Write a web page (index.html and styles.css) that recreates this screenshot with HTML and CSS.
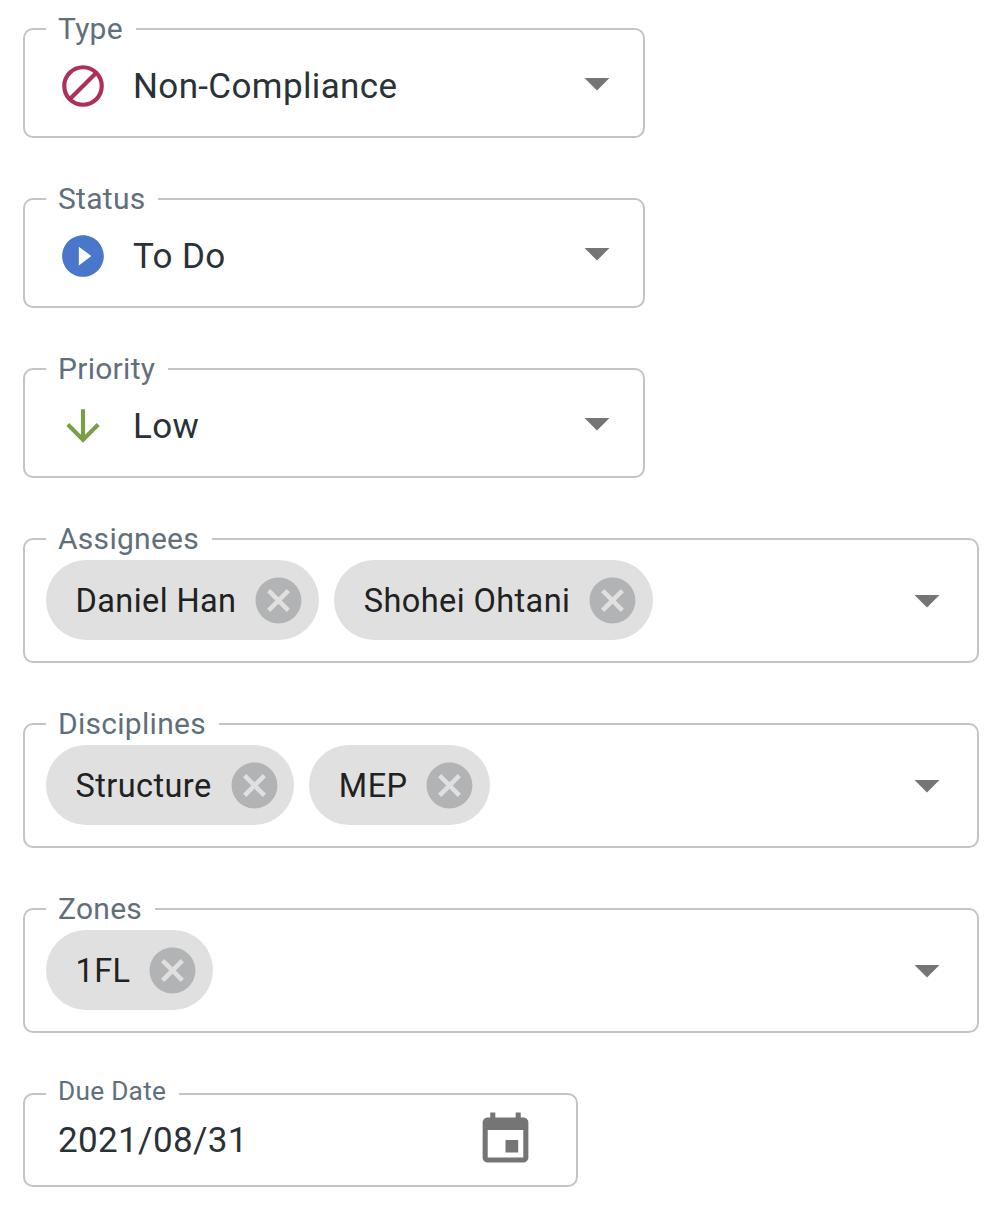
FILE: index.html
```html
<!DOCTYPE html>
<html lang="en">
<head>
<meta charset="utf-8">
<title>Issue details</title>
<link rel="stylesheet" href="styles.css">
</head>
<body>
<svg class="symbols" aria-hidden="true">
  <symbol id="caret" viewBox="0 0 24 24"><path d="M7 10l5 5 5-5z"/></symbol>
  <symbol id="cancel" viewBox="0 0 24 24"><path d="M12 2C6.47 2 2 6.47 2 12s4.47 10 10 10 10-4.47 10-10S17.53 2 12 2zm5 13.59L15.59 17 12 13.41 8.41 17 7 15.59 10.59 12 7 8.41 8.41 7 12 10.59 15.59 7 17 8.41 13.41 12 17 15.59z"/></symbol>
</svg>
<form class="form">
  <div class="field select">
    <span class="label">Type</span>
    <svg class="icon type" viewBox="0 0 24 24"><circle cx="12" cy="12" r="9"/><path d="M5.6 18.4L18.4 5.6"/></svg>
    <span class="value">Non-Compliance</span>
    <svg class="caret"><use href="#caret"/></svg>
  </div>
  <div class="field select">
    <span class="label">Status</span>
    <svg class="icon status" viewBox="0 0 24 24"><path d="M12 2C6.48 2 2 6.48 2 12s4.48 10 10 10 10-4.48 10-10S17.52 2 12 2zm-2 14.5v-9l6 4.5-6 4.5z"/></svg>
    <span class="value">To Do</span>
    <svg class="caret"><use href="#caret"/></svg>
  </div>
  <div class="field select">
    <span class="label">Priority</span>
    <svg class="icon priority" viewBox="0 0 24 24"><path d="M20 12l-1.41-1.41L13 16.17V4h-2v12.17l-5.58-5.59L4 12l8 8 8-8z"/></svg>
    <span class="value">Low</span>
    <svg class="caret"><use href="#caret"/></svg>
  </div>
  <div class="field multi">
    <span class="label">Assignees</span>
    <div class="chips">
      <span class="chip">Daniel Han<svg><use href="#cancel"/></svg></span>
      <span class="chip">Shohei Ohtani<svg><use href="#cancel"/></svg></span>
    </div>
    <svg class="caret"><use href="#caret"/></svg>
  </div>
  <div class="field multi">
    <span class="label">Disciplines</span>
    <div class="chips">
      <span class="chip">Structure<svg><use href="#cancel"/></svg></span>
      <span class="chip">MEP<svg><use href="#cancel"/></svg></span>
    </div>
    <svg class="caret"><use href="#caret"/></svg>
  </div>
  <div class="field multi">
    <span class="label">Zones</span>
    <div class="chips">
      <span class="chip">1FL<svg><use href="#cancel"/></svg></span>
    </div>
    <svg class="caret"><use href="#caret"/></svg>
  </div>
  <div class="field date">
    <span class="label">Due Date</span>
    <span class="value">2021/08/31</span>
    <svg class="calendar" viewBox="0 0 24 24" preserveAspectRatio="none"><path d="M17 12h-5v5h5v-5zM16 1v2H8V1H6v2H5c-1.11 0-1.99.9-1.99 2L3 19c0 1.1.89 2 2 2h14c1.1 0 2-.9 2-2V5c0-1.1-.9-2-2-2h-1V1h-2zm3 18H5V8h14v11z"/></svg>
  </div>
</form>
</body>
</html>
```

FILE: styles.css
```css
* { box-sizing: border-box; }
body {
  margin: 0;
  background: #fff;
  color: #293237;
  font-family: Roboto, sans-serif;
}
.symbols { display: none; }
.form {
  display: flex;
  flex-direction: column;
  align-items: flex-start;
  gap: 60px;
  padding: 28px 21px 25px 23px;
}
.field {
  position: relative;
  display: flex;
  align-items: center;
  border: 2px solid #c4c4c4;
  border-radius: 10px;
}
.select { width: 622px; height: 110px; padding: 0 16px 0 33px; }
.multi { width: 956px; height: 125px; padding: 0 20px 0 21px; }
.date { width: 555px; height: 94px; padding: 0 40px 0 33px; }
.label {
  position: absolute;
  left: 21px;
  top: -19px;
  padding: 0 13px 0 12px;
  background: #fff;
  color: #5f6f7c;
  font-size: 30px;
  line-height: 36px;
  letter-spacing: 0.28px;
  white-space: nowrap;
}
.date .label { top: -22px; font-size: 26.25px; letter-spacing: 0.25px; }
.value {
  flex: 1;
  font-size: 35px;
  line-height: 42px;
  letter-spacing: 0.36px;
}
.icon { width: 50px; height: 50px; margin: 6px 25px 0 0; }
.select .value { margin-top: 8px; }
.date .value { margin-top: 2px; }
.type { fill: none; stroke: #ad2f5b; stroke-width: 2; }
.status { fill: #4a76cb; }
.priority { fill: #7a9f47; }
.caret { width: 60px; height: 60px; fill: #757575; }
.multi .caret { margin-bottom: 1px; }
.chips { display: flex; flex: 1; gap: 15px; align-self: flex-start; padding-top: 20px; }
.chip {
  display: flex;
  align-items: center;
  gap: 15px;
  height: 80px;
  padding: 2px 12.8px 0 29.5px;
  border-radius: 40px;
  background: #e0e0e0;
  color: #212121;
  font-size: 32.5px;
  letter-spacing: 0.41px;
  white-space: nowrap;
}
.chip svg { width: 55px; height: 55px; margin-bottom: 2px; fill: #b1b3b5; }
.calendar { width: 61px; height: 60px; fill: #757575; }
```
